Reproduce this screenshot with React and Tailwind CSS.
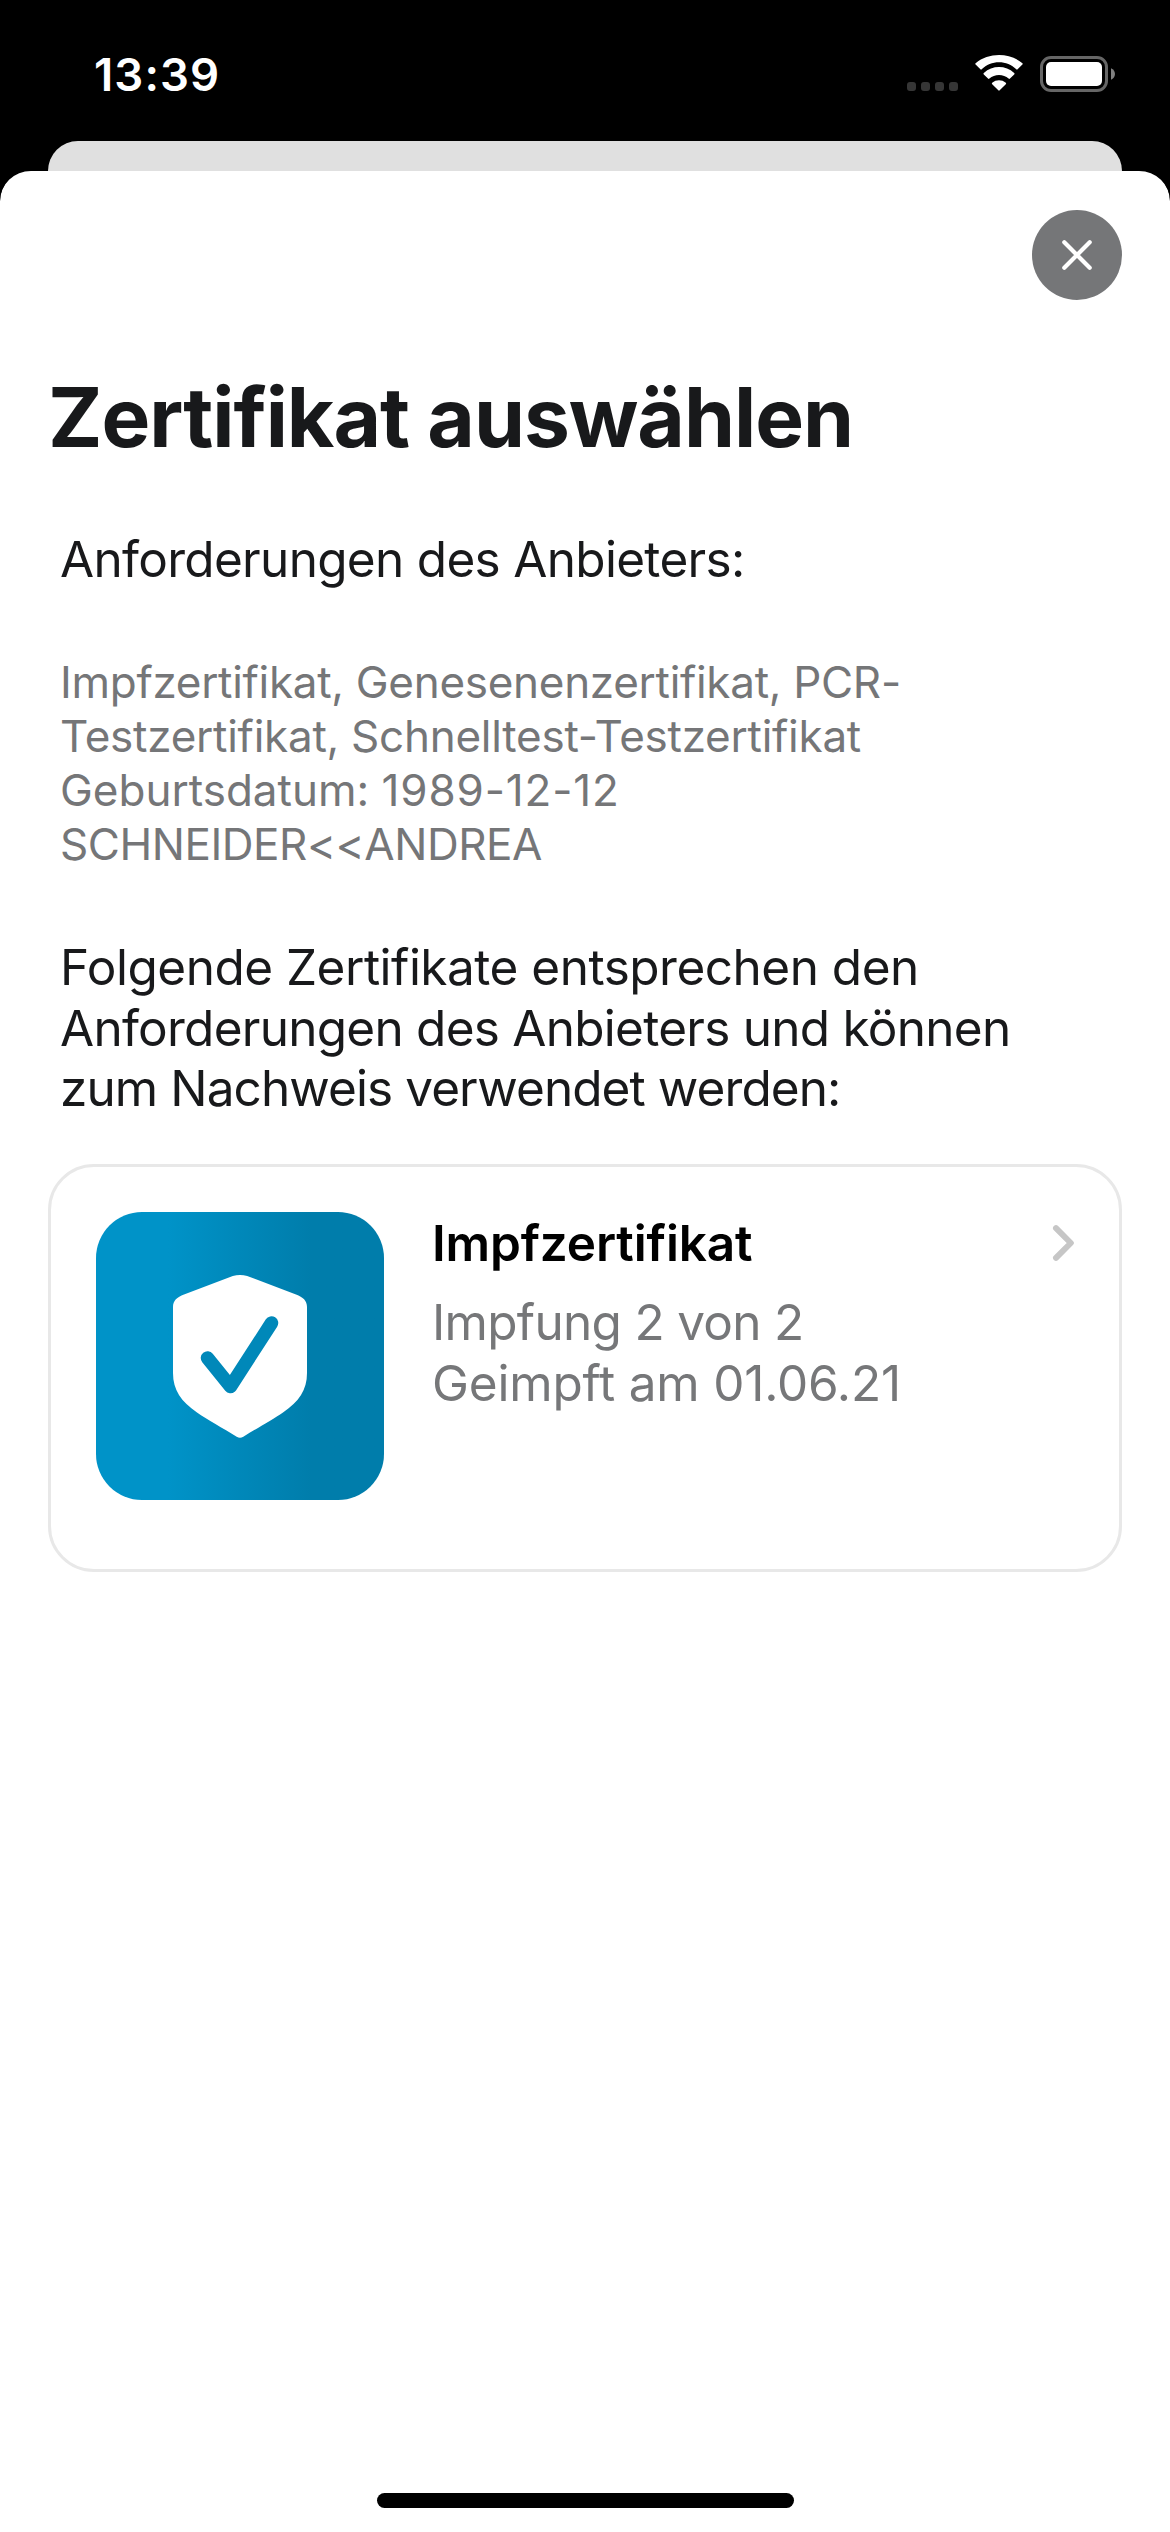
function WifiIcon() {
  return (
    <svg className="block h-[36px] w-[48px]" viewBox="0 0 48 36" fill="#fff">
      <path d="M24 7.3c6.5 0 12.7 2.5 17.3 7a.9.9 0 0 0 1.3 0l4.8-4.7a1 1 0 0 0 0-1.4C34.300-2.700 13.700-2.700.6 8.200a1 1 0 0 0 0 1.400l4.800 4.700a.9.9 0 0 0 1.300 0c4.600-4.500 10.800-7 17.300-7z" />
      <path d="M24 19.900c3.600 0 7 1.300 9.600 3.700a1 1 0 0 0 1.400 0l4.200-4.200a1 1 0 0 0 0-1.500c-8.600-7.900-21.800-7.900-30.400 0a1 1 0 0 0 0 1.500l4.200 4.200a1 1 0 0 0 1.400 0c2.600-2.400 6-3.700 9.600-3.700z" />
      <path d="M30.800 29.200a1 1 0 0 0 0-1.500c-3.900-3.300-9.700-3.300-13.600 0a1 1 0 0 0 0 1.500l6.100 6.100a1 1 0 0 0 1.400 0z" />
    </svg>
  )
}

function BatteryIcon() {
  return (
    <svg className="block h-[36px] w-[75px]" viewBox="0 0 75 36">
      <rect x="1.500" y="1.500" width="65" height="33" rx="9.500" fill="none" stroke="#666" strokeWidth="3" />
      <rect x="6" y="6" width="56" height="24" rx="5" fill="#fff" />
      <path d="M71 12.300c2.400 1 4 3.200 4 5.700s-1.600 4.700-4 5.700z" fill="#808080" />
    </svg>
  )
}

function StatusBar() {
  return (
    <div className="flex h-[141px] items-start justify-between pr-[55px] pl-[94px]">
      <time className="mt-[48px] text-[45.5px] leading-[54px] font-semibold tracking-[1.1px] text-white">13:39</time>
      <div className="mt-[56px] flex items-start">
        <div className="mt-[26px] flex gap-[5px]">
          {[0, 1, 2, 3].map((i) => (
            <span key={i} className="size-[9px] rounded-[3px] bg-[#363636]" />
          ))}
        </div>
        <div className="-mt-[1px] ml-[17px]">
          <WifiIcon />
        </div>
        <div className="ml-[17px]">
          <BatteryIcon />
        </div>
      </div>
    </div>
  )
}

function CertificateIcon() {
  return (
    <div className="flex size-[288px] shrink-0 items-center justify-center rounded-[46px] bg-linear-to-r from-[#0093c8] from-25% to-[#007dab] to-75%">
      <svg className="block size-[288px]" viewBox="0 0 288 288">
        <path
          d="M136.800 64C141.500 62.600 146.500 62.600 151.200 64L200 82.500C207 85.200 211 88.500 211 95V161C211 178 203 189.500 187 200.500C177 207.400 161 216.300 147.300 224.700C145 226.200 143 226.200 140.700 224.700C127 216.300 111 207.400 101 200.500C85 189.500 77 178 77 161V95C77 88.500 81 85.200 88 82.500Z"
          fill="#fff"
        />
        <path
          d="M111.500 146L134.500 174.500L175.500 111"
          fill="none"
          stroke="#0088b9"
          strokeWidth="13.500"
          strokeLinecap="round"
          strokeLinejoin="round"
        />
      </svg>
    </div>
  )
}

function CertificateCard() {
  return (
    <button className="mt-[45.5px] flex h-[408px] w-full items-start rounded-[46px] border-[3px] border-[#e8e8e8] bg-white p-[45px] text-left">
      <CertificateIcon />
      <div className="ml-[48px] flex-1 pt-px">
        <h2 className="text-[49.5px] leading-[60px] font-semibold tracking-[-0.14px] text-black">Impfzertifikat</h2>
        <div className="mt-[19px] text-[49.5px] leading-[60.5px] text-[#767779]">
          <p className="tracking-[-0.7px]">Impfung 2 von 2</p>
          <p className="tracking-[-0.19px]">Geimpft am 01.06.21</p>
        </div>
      </div>
      <svg className="mt-[13px] block h-[36px] w-[23px]" viewBox="0 0 23 36">
        <path d="M5 3.200L19.800 18L5 32.800" fill="none" stroke="#c6c6c6" strokeWidth="6" strokeLinecap="round" strokeLinejoin="round" />
      </svg>
    </button>
  )
}

export default function App() {
  return (
    <div className="flex h-[2532px] w-[1170px] flex-col overflow-hidden bg-black font-['Inter',sans-serif]">
      <StatusBar />
      <div className="mx-[48px] h-[30px] rounded-t-[30px] bg-[#e0e0e0]" />
      <main className="-mt-px flex flex-1 flex-col rounded-t-[31px] border-t border-transparent bg-white bg-clip-padding px-[48px] pt-[39px] pb-[24px]">
        <button aria-label="Schließen" className="flex size-[90px] items-center justify-center self-end rounded-full bg-[#757678]">
          <svg className="block size-[30px]" viewBox="0 0 30 30">
            <path d="M2.300 2.300L27.700 27.700M27.700 2.300L2.300 27.700" stroke="#fff" strokeWidth="4.200" strokeLinecap="round" />
          </svg>
        </button>

        <h1 className="mt-[67px] text-[82px] leading-[102px] font-bold tracking-[-1.03px] text-[#18191b]">Zertifikat auswählen</h1>

        <section className="pl-[12px] whitespace-nowrap text-[#18191b]">
          <p className="mt-[60px] text-[49.5px] leading-[61px] tracking-[-0.69px]">Anforderungen des Anbieters:</p>
          <div className="mt-[65px] text-[44px] leading-[54px] text-[#757678]">
            <p className="tracking-[-0.29px]">Impfzertifikat, Genesenenzertifikat, PCR-</p>
            <p className="tracking-[-0.25px]">Testzertifikat, Schnelltest-Testzertifikat</p>
            <p>
              Geburtsdatum: <span className="tracking-[0.86px]">1989-12-12</span>
            </p>
            <p className="tracking-[-0.45px]">SCHNEIDER&lt;&lt;ANDREA</p>
          </div>
          <div className="mt-[66px] text-[49.5px] leading-[60.5px]">
            <p className="tracking-[-0.5px]">Folgende Zertifikate entsprechen den</p>
            <p className="tracking-[-0.74px]">Anforderungen des Anbieters und können</p>
            <p className="tracking-[-0.91px]">zum Nachweis verwendet werden:</p>
          </div>
        </section>

        <CertificateCard />

        <div className="mt-auto h-[15px] w-[417px] self-center rounded-full bg-black" />
      </main>
    </div>
  )
}
